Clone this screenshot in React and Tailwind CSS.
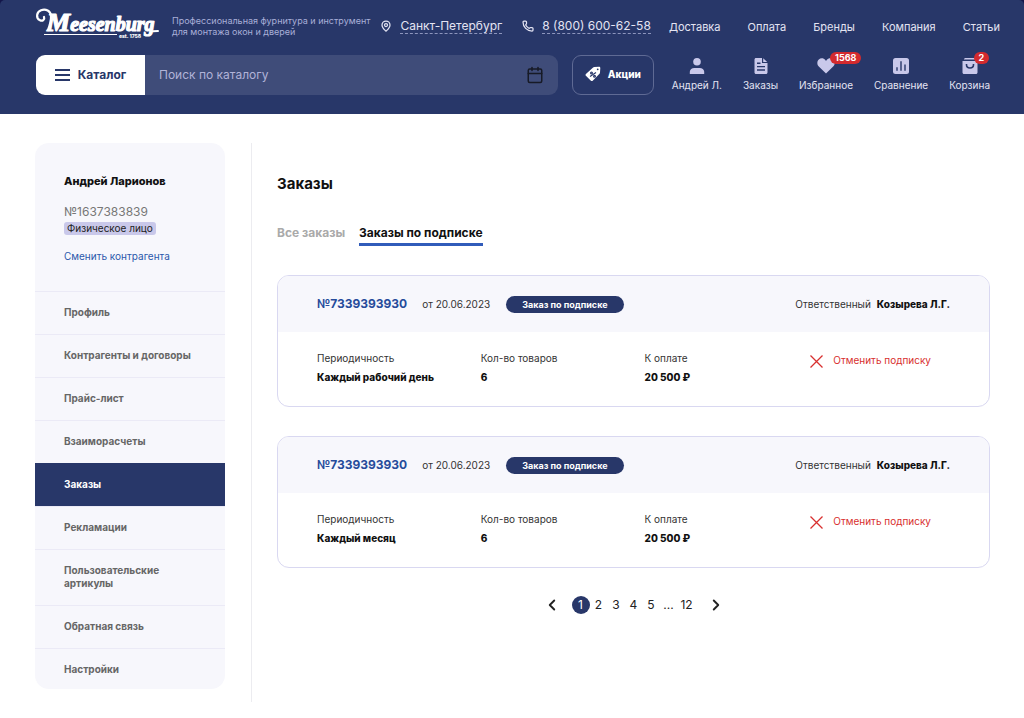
import { Calendar, ChevronLeft, ChevronRight, MapPin, Phone } from "lucide-react";

const topLinks = ["Доставка", "Оплата", "Бренды", "Компания", "Статьи"];

const menuItems = [
  "Профиль",
  "Контрагенты и договоры",
  "Прайс-лист",
  "Взаиморасчеты",
  "Заказы",
  "Рекламации",
  "Пользовательские артикулы",
  "Обратная связь",
  "Настройки",
];

const orders = [
  { id: 1, period: "Каждый рабочий день" },
  { id: 2, period: "Каждый месяц" },
];

function Logo() {
  return (
    <svg viewBox="0 0 124 34" className="h-[34px] w-[124px] overflow-visible" role="img" aria-label="Meesenburg">
      <path
        d="M8 8C9 10.500 6.500 12.500 4 11.200C-0.500 9 0.500 3 5 1.200C10 -0.500 14.500 2 15 6.500C15.300 11 14 16 12 21"
        fill="none"
        stroke="#fff"
        strokeWidth="2.200"
        strokeLinecap="round"
      />
      <text
        x="11"
        y="22"
        fill="#fff"
        stroke="#fff"
        strokeWidth="1.200"
        strokeLinejoin="round"
        fontFamily="Liberation Serif, serif"
        fontStyle="italic"
        fontWeight="700"
        fontSize="20"
      >
        <tspan fontSize="26">M</tspan>eesenburg
      </text>
      <path d="M117 22.300L122 22" stroke="#fff" strokeWidth="2" strokeLinecap="round" />
      <path d="M8 25.500H81" stroke="#fff" strokeWidth="1.200" />
      <text x="83" y="29" fill="#fff" fontFamily="Inter, sans-serif" fontWeight="800" fontSize="5">
        est. 1758
      </text>
    </svg>
  );
}

function TagIcon() {
  return (
    <svg viewBox="0 0 16 16" className="h-4 w-4" aria-hidden="true">
      <path
        d="M9.300 1.100L14 .8c.8 0 1.300.5 1.300 1.200L15 6.600c0 .5-.2.900-.5 1.200l-6.800 6.900c-.5.500-1.300.500-1.800 0L.9 9.800c-.5-.5-.5-1.300 0-1.800l7.200-6.400c.3-.3.700-.5 1.200-.5z"
        fill="#fff"
      />
      <circle cx="12.700" cy="3.300" r="0.900" fill="#283769" />
      <g fill="none" stroke="#283769" strokeWidth="1.200">
        <path d="M5 10.500l6-4" />
        <circle cx="6.500" cy="6.900" r="0.900" />
        <circle cx="9.500" cy="10.200" r="0.900" />
      </g>
    </svg>
  );
}

function UserIcon() {
  return (
    <svg viewBox="0 0 16 16" className="h-4 w-4" fill="#c9c8ea" aria-hidden="true">
      <circle cx="8" cy="3.800" r="3.800" />
      <path d="M.8 16v-2.200C.8 11.500 3 10 5.200 10h5.600c2.200 0 4.400 1.500 4.400 3.800V16z" />
    </svg>
  );
}

function FileIcon() {
  return (
    <svg viewBox="0 0 16 16" className="h-4 w-4" aria-hidden="true">
      <path d="M3 0h6v5h5.500v9.500c0 .8-.7 1.500-1.500 1.500H3c-.8 0-1.500-.7-1.500-1.500v-13C1.500.7 2.200 0 3 0z" fill="#c9c8ea" />
      <path d="M10.200.3l4 3.600h-4z" fill="#c9c8ea" />
      <path d="M4 5.300h3.500M4 8.600h8M4 12h8" stroke="#283769" strokeWidth="1.400" />
    </svg>
  );
}

function HeartIcon() {
  return (
    <svg viewBox="0 0 18 16" className="h-4 w-[18px]" fill="#c9c8ea" aria-hidden="true">
      <path d="M9 15.500L1.800 8.600C-.2 6.500-.1 3.200 1.800 1.500c2-1.800 5-1.400 6.500.6L9 3l.7-.9c1.500-2 4.500-2.400 6.500-.6 1.900 1.700 2 5 0 7.100z" />
    </svg>
  );
}

function CompareIcon() {
  return (
    <svg viewBox="0 0 16 16" className="h-4 w-4" aria-hidden="true">
      <rect width="16" height="16" rx="2.500" fill="#c9c8ea" />
      <path d="M4 9.300v3.500M8 3.300v9.500M12 6.500v6.300" stroke="#283769" strokeWidth="1.400" />
    </svg>
  );
}

function CartIcon() {
  return (
    <svg viewBox="0 0 16 16" className="h-4 w-4" aria-hidden="true">
      <path d="M2.800 0h10.400v1.500H1.800zM.5 3h15v11.500c0 .8-.7 1.500-1.500 1.500H2C1.200 16 .5 15.300.5 14.500z" fill="#c9c8ea" />
      <path d="M4.500 6v.8c0 1.800 1.500 3.200 3.500 3.200s3.500-1.400 3.500-3.200V6" fill="none" stroke="#283769" strokeWidth="1.600" />
    </svg>
  );
}

const shortcuts = [
  { label: "Андрей Л.", Icon: UserIcon },
  { label: "Заказы", Icon: FileIcon },
  { label: "Избранное", Icon: HeartIcon, count: "1568" },
  { label: "Сравнение", Icon: CompareIcon },
  { label: "Корзина", Icon: CartIcon, count: "2" },
];

function Header() {
  return (
    <div className="bg-[#14164a]">
      <header className="rounded-t-[5px] bg-[#283769] pt-[6px] pb-[19px] pl-9 text-[#e4e4f3]">
        <div className="flex h-10 items-center pr-6">
          <a href="#" className="shrink-0">
            <Logo />
          </a>
          <p className="ml-3 shrink-0 text-[9px] leading-[11px] whitespace-nowrap text-[#a9afd8]">
            Профессиональная фурнитура и инструмент
            <br />
            для монтажа окон и дверей
          </p>
          <div className="ml-[10px] flex items-center gap-5 text-[12px] leading-[15px] whitespace-nowrap">
            <a href="#" className="flex items-center gap-2">
              <MapPin size={12} strokeWidth={2.5} />
              <span className="border-b border-dashed border-[#8d95bd]">Санкт-Петербург</span>
            </a>
            <a href="tel:88006006258" className="flex items-center gap-2">
              <Phone size={12} strokeWidth={2.5} />
              <span className="border-b border-dashed border-[#8d95bd]">8 (800) 600-62-58</span>
            </a>
          </div>
          <nav className="ml-auto flex gap-[27px] pt-[2px] text-[11px] leading-4">
            {topLinks.map((link) => (
              <a key={link} href="#">
                {link}
              </a>
            ))}
          </nav>
        </div>

        <div className="mt-[9px] flex h-10 pr-[34px]">
          <button className="flex w-[109px] shrink-0 items-center justify-center gap-2 rounded-l-[9px] bg-white text-[12px] font-bold text-[#283769]">
            <svg viewBox="0 0 15 12" className="h-3 w-[15px]" stroke="#283769" strokeWidth="2" aria-hidden="true">
              <path d="M0 1h15M0 6h15M0 11h15" />
            </svg>
            Каталог
          </button>
          <form className="flex flex-1 items-center rounded-r-[9px] bg-[#3f4c79] pr-[14px] pl-[14px]">
            <input
              type="search"
              aria-label="Поиск по каталогу"
              placeholder="Поиск по каталогу"
              className="min-w-0 flex-1 bg-transparent text-[12px] outline-none placeholder:text-[#b1b3d8]"
            />
            <button type="button" aria-label="Выбрать дату" className="text-[#171a26]">
              <Calendar size={18} strokeWidth={2} />
            </button>
          </form>
          <button className="ml-[14px] flex w-[82px] shrink-0 items-center justify-center gap-[7px] rounded-[9px] border border-[#5f6a94] pb-[2px] text-[10px] font-extrabold text-white">
            <TagIcon />
            Акции
          </button>
          <nav className="ml-[18px] flex shrink-0 gap-[21px] text-[10px] leading-3">
            {shortcuts.map(({ label, Icon, count }) => (
              <a key={label} href="#" className="flex flex-col items-center pt-[3px]">
                <span className="relative">
                  <Icon />
                  {count && (
                    <span className="absolute -top-[6px] left-[calc(50%+4px)] rounded-full bg-[#d32a2e] px-[5px] text-[9px] leading-3 font-bold text-white">
                      {count}
                    </span>
                  )}
                </span>
                <span className="mt-[5px]">{label}</span>
              </a>
            ))}
          </nav>
        </div>
      </header>
    </div>
  );
}

function Sidebar() {
  return (
    <aside className="w-[190px] shrink-0 self-start overflow-hidden rounded-[14px] bg-[#f7f7fc]">
      <div className="flex h-[148px] flex-col items-start px-[29px] pt-[30px]">
        <p className="text-[11px] leading-4 font-extrabold text-[#111]">Андрей Ларионов</p>
        <p className="mt-[15px] text-[12px] leading-4 text-[#777]">№1637383839</p>
        <span className="mt-[2px] rounded-[3px] bg-[#c9c8ea] px-[3px] text-[10px] leading-[13px] text-[#222]">
          Физическое лицо
        </span>
        <a href="#" className="mt-[13px] text-[10px] leading-4 text-[#2b57ab]">
          Сменить контрагента
        </a>
      </div>
      <nav className="text-[10px] leading-[13px] font-bold">
        {menuItems.map((item) => (
          <a
            key={item}
            href="#"
            className={
              item === "Заказы"
                ? "block border-t border-[#283769] bg-[#283769] px-[29px] pt-[14px] pb-[15px] text-white"
                : "block border-t border-[#ebeaf6] px-[29px] pt-[14px] pb-[15px] text-[#666] last:pb-[13px]"
            }
          >
            {item}
          </a>
        ))}
      </nav>
    </aside>
  );
}

function OrderCard({ period }) {
  return (
    <article className="overflow-hidden rounded-[12px] border border-[#d9d8f1]">
      <div className="flex h-14 items-center bg-[#f7f7fc] px-[39px] text-[10px]">
        <a href="#" className="text-[12px] font-bold text-[#264b9b]">
          №7339393930
        </a>
        <span className="ml-[15px] text-[#333]">от 20.06.2023</span>
        <span className="ml-4 rounded-full bg-[#283769] px-4 text-[9px] leading-[17px] font-bold text-white">
          Заказ по подписке
        </span>
        <span className="ml-auto text-[#333]">Ответственный</span>
        <b className="ml-[6px] font-extrabold text-[#111]">Козырева Л.Г.</b>
      </div>
      <div className="grid grid-cols-4 gap-[22px] px-[39px] pt-[17px] pb-[19px] text-[10px] leading-[19px] text-[#333]">
        <div>
          <p>Периодичность</p>
          <p className="font-extrabold whitespace-nowrap text-[#111]">{period}</p>
        </div>
        <div>
          <p>Кол-во товаров</p>
          <p className="font-extrabold text-[#111]">6</p>
        </div>
        <div>
          <p>К оплате</p>
          <p className="font-extrabold text-[#111]">20 500 ₽</p>
        </div>
        <button className="flex items-center gap-[10px] self-start pt-[2px] pl-[2px] whitespace-nowrap text-[#d8302f]">
          <svg viewBox="0 0 13 13" className="mt-[2px] h-[13px] w-[13px]" stroke="#d8302f" strokeWidth="1.300" aria-hidden="true">
            <path d="M.5.5l12 12M12.500.5l-12 12" />
          </svg>
          Отменить подписку
        </button>
      </div>
    </article>
  );
}

function Pagination() {
  return (
    <nav aria-label="Страницы" className="mt-7 flex items-center justify-center text-[12px] leading-[18px] text-[#222]">
      <button aria-label="Назад">
        <ChevronLeft size={18} strokeWidth={2.5} />
      </button>
      <div className="mx-[11px] flex">
        <button aria-current="page" className="w-[18px] rounded-full bg-[#283769] text-white">
          1
        </button>
        <button className="w-[18px]">2</button>
        <button className="w-[17px]">3</button>
        <button className="w-[18px]">4</button>
        <button className="w-[17px]">5</button>
        <span className="w-[18px] text-center">...</span>
        <button className="w-[18px]">12</button>
      </div>
      <button aria-label="Вперёд">
        <ChevronRight size={18} strokeWidth={2.5} />
      </button>
    </nav>
  );
}

export default function App() {
  return (
    <div className="min-h-screen bg-white font-['Inter',sans-serif]">
      <Header />
      <div className="flex pt-[29px] pr-[34px] pb-4 pl-[35px]">
        <Sidebar />
        <main className="ml-[26px] min-h-[559px] flex-1 border-l border-[#ececf0] pl-[25px]">
          <h1 className="mt-[31px] text-[15px] leading-5 font-bold text-[#111]">Заказы</h1>
          <div className="mt-[29px] flex gap-[14px] text-[12px] leading-5 font-bold">
            <a href="#" className="text-[#aaa]">
              Все заказы
            </a>
            <a href="#" className="border-b-[3px] border-[#315cba] text-[#111]">
              Заказы по подписке
            </a>
          </div>
          <div className="mt-[29px] flex flex-col gap-[29px]">
            {orders.map((order) => (
              <OrderCard key={order.id} period={order.period} />
            ))}
          </div>
          <Pagination />
        </main>
      </div>
    </div>
  );
}
